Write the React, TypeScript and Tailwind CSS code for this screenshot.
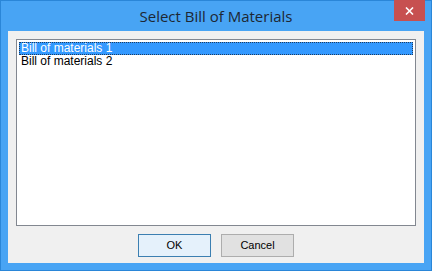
import React from 'react'

const items = ['Bill of materials 1', 'Bill of materials 2']

export default function App() {
	return (
		<div className="flex h-[271px] w-[432px] flex-col border border-[#2a86d8] bg-[#48a4f4]">
			{/* title bar */}
			<div className="relative flex h-[30px] items-center justify-center">
				<span className="text-[15px] text-[#1d2733]" style={{ fontFamily: '"Segoe UI", "Open Sans", "Noto Sans", sans-serif' }}>
					Select Bill of Materials
				</span>
				<div className="absolute right-[6px] top-[-1px] flex h-[21px] w-[31px] items-center justify-center bg-[#c75050]">
					<svg width="9" height="8" viewBox="0 0 9 8">
						<path d="M1 0.5 L8 7.5 M8 0.5 L1 7.5" stroke="white" strokeWidth="1.6" />
					</svg>
				</div>
			</div>

			{/* client area */}
			<div className="mx-[7px] mb-[7px] flex flex-1 flex-col bg-[#f0f0f0] px-[8px] pt-[8px]">
				<div className="h-[187px] border border-[#828790] bg-white p-[2px]" style={{ fontFamily: '"Liberation Sans Narrow", "Arial Narrow", "Liberation Sans", sans-serif' }}>
					{items.map((item, i) => (
						<div
							key={item}
							className={`h-[13px] px-[1px] text-[12px] ${i === 0 ? 'border border-dotted border-[#1e3c60] bg-[#3399ff] leading-[11px] text-white' : 'pl-[2px] leading-[13px] text-black'}`}
						>
							{item}
						</div>
					))}
				</div>
				<div className="flex justify-center gap-[10px] pt-[8px]" style={{ fontFamily: '"Liberation Sans", Arial, sans-serif' }}>
					<button className="h-[23px] w-[73px] border border-[#3c7fb1] bg-[#e5f1fb] text-[11px] text-black">OK</button>
					<button className="h-[23px] w-[73px] border border-[#adadad] bg-[#e1e1e1] text-[11px] text-black">Cancel</button>
				</div>
			</div>
		</div>
	)
}
